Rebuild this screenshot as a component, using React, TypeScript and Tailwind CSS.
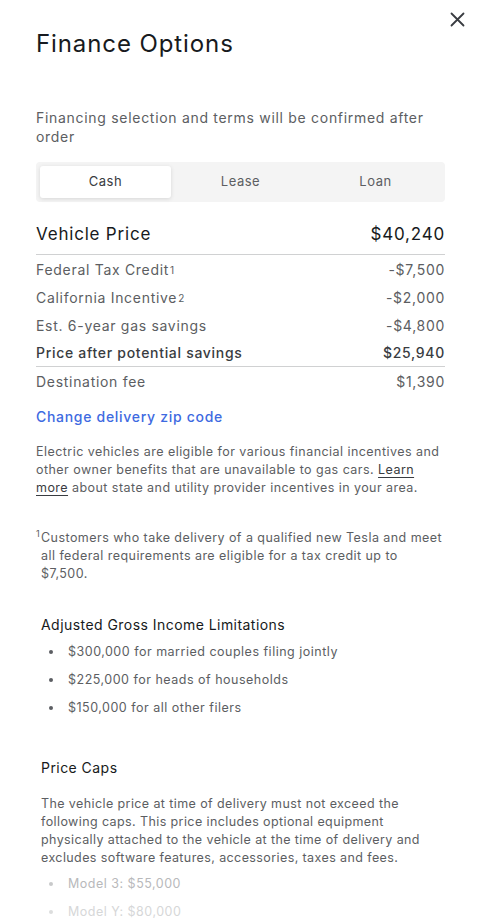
import React from 'react';

const font = { fontFamily: 'Inter, "Liberation Sans", sans-serif' };

const rows = [
  { label: 'Federal Tax Credit', sup: '1', value: '-$7,500' },
  { label: 'California Incentive', sup: '2', value: '-$2,000' },
  { label: 'Est. 6-year gas savings', value: '-$4,800' },
];

const agi = [
  '$300,000 for married couples filing jointly',
  '$225,000 for heads of households',
  '$150,000 for all other filers',
];

export default function App() {
  return (
    <div className="relative w-[487px] h-[923px] overflow-hidden bg-white text-[#5c5e62]" style={font}>
      {/* Close button */}
      <button className="absolute right-[22px] top-[11px] w-[16px] h-[16px] flex items-center justify-center text-[#393c41]">
        <svg width="15" height="15" viewBox="0 0 15 15" fill="none" stroke="currentColor" strokeWidth="1.8" strokeLinecap="round">
          <path d="M1.5 1.5L13.5 13.5M13.5 1.5L1.5 13.5" />
        </svg>
      </button>

      <div className="pl-[36px] pr-[42px]">
        <h1 className="pt-[28px] text-[24px] leading-[32px] text-[#171a20] tracking-[0.9px]">Finance Options</h1>

        <p className="mt-[48px] text-[14px] leading-[19px] tracking-[0.7px]">
          Financing selection and terms will be confirmed after order
        </p>

        {/* Tabs */}
        <div className="mt-[16px] flex h-[40px] rounded-[4px] bg-[#f4f4f4] p-[4px] gap-[4px] text-[13px] tracking-[0.5px]">
          <div className="flex-1 flex items-center justify-center rounded-[3px] bg-white text-[#393c41] shadow-[0_1px_4px_rgba(0,0,0,0.12)]">Cash</div>
          <div className="flex-1 flex items-center justify-center text-[#5c5e62]">Lease</div>
          <div className="flex-1 flex items-center justify-center text-[#5c5e62]">Loan</div>
        </div>

        {/* Vehicle price */}
        <div className="mt-[13px] flex justify-between items-center h-[40px] border-b border-[#d0d1d2] text-[17px] text-[#171a20] tracking-[0.8px]">
          <span>Vehicle Price</span>
          <span>$40,240</span>
        </div>

        {rows.map(r => (
          <div key={r.label} className="flex justify-between items-center h-[28px] text-[14px] tracking-[0.7px]">
            <span>
              {r.label}
              {r.sup && <sup className="text-[10px] relative top-[-1px] ml-[1px]">{r.sup}</sup>}
            </span>
            <span>{r.value}</span>
          </div>
        ))}

        <div className="flex justify-between items-center h-[28px] border-b border-[#d0d1d2] text-[14px] font-medium text-[#393c41] tracking-[0.7px]">
          <span>Price after potential savings</span>
          <span>$25,940</span>
        </div>

        <div className="flex justify-between items-center h-[28px] text-[14px] tracking-[0.7px]">
          <span>Destination fee</span>
          <span>$1,390</span>
        </div>

        <a className="block mt-[11px] text-[14px] font-medium text-[#3e6ae1] tracking-[0.7px]">Change delivery zip code</a>

        <p className="mt-[16px] text-[12.5px] leading-[18px] tracking-[0.45px]">
          Electric vehicles are eligible for various financial incentives and other owner benefits that are unavailable to gas cars.{' '}
          <span className="text-[#393c41] underline underline-offset-[3px] decoration-[#393c41]">Learn more</span> about state and utility provider incentives in your area.
        </p>

        {/* Footnote */}
        <div className="mt-[32px] flex items-start text-[12.5px] leading-[18px] tracking-[0.45px]">
          <span className="text-[9px] leading-[10px] w-[5px] shrink-0">1</span>
          <p>Customers who take delivery of a qualified new Tesla and meet all federal requirements are eligible for a tax credit up to $7,500.</p>
        </div>

        <div className="pl-[5px]">
          <h3 className="mt-[31px] text-[14px] text-[#171a20] tracking-[0.45px]">Adjusted Gross Income Limitations</h3>
          <ul className="mt-[3px]">
            {agi.map(a => (
              <li key={a} className="flex items-center h-[28px] text-[12.5px] tracking-[0.5px]">
                <span className="w-[4px] h-[4px] rounded-full bg-[#5c5e62] ml-[8px] mr-[15px]" />
                {a}
              </li>
            ))}
          </ul>

          <h3 className="mt-[35px] text-[14px] text-[#171a20] tracking-[0.45px]">Price Caps</h3>
          <p className="mt-[17px] text-[12.5px] leading-[18px] tracking-[0.4px]">
            The vehicle price at time of delivery must not exceed the following caps. This price includes optional equipment physically attached to the vehicle at the time of delivery and excludes software features, accessories, taxes and fees.
          </p>
          <ul className="mt-[3px] text-[#b8b9bb]">
            <li className="flex items-center h-[28px] text-[12.5px] tracking-[0.5px]">
              <span className="w-[4px] h-[4px] rounded-full bg-[#c8c9ca] ml-[8px] mr-[15px]" />
              Model 3: $55,000
            </li>
            <li className="flex items-center h-[28px] text-[12.5px] tracking-[0.5px] text-[#d6d7d8]">
              <span className="w-[4px] h-[4px] rounded-full bg-[#dcdddd] ml-[8px] mr-[15px]" />
              Model Y: $80,000
            </li>
          </ul>
        </div>
      </div>
    </div>
  );
}
